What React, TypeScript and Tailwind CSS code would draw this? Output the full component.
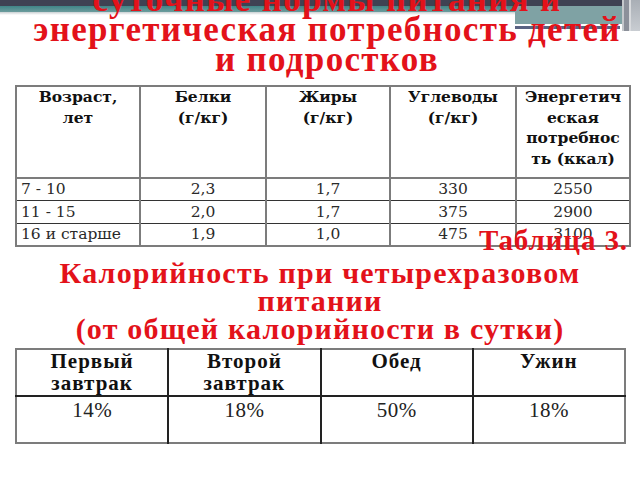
const nutrition = [
  { age: '7 - 10', protein: '2,3', fat: '1,7', carbs: '330', energy: '2550' },
  { age: '11 - 15', protein: '2,0', fat: '1,7', carbs: '375', energy: '2900' },
  { age: '16 и старше', protein: '1,9', fat: '1,0', carbs: '475', energy: '3100' },
];

const meals = [
  { name: ['Первый', 'завтрак'], share: '14%' },
  { name: ['Второй', 'завтрак'], share: '18%' },
  { name: ['Обед'], share: '50%' },
  { name: ['Ужин'], share: '18%' },
];

const serif = "font-['Liberation_Serif',serif]";
const dejavu = "font-['DejaVu_Serif',serif]";

function HeaderDecor() {
  return (
    <div className="absolute inset-0 pointer-events-none">
      <div className="absolute left-0 top-0 w-[622px] h-[21px] bg-[#3f4253]" />
      <div className="absolute left-0 top-[21px] w-[622px] h-[6px] bg-gradient-to-b from-[#3f8587] to-[#6c9c9d]" />
      <div className="absolute left-0 top-[27px] w-[515px] h-[3px] bg-gradient-to-b from-[#c9d0d2] to-white" />
      <div className="absolute left-[515px] top-[21px] w-[107px] h-[18px] bg-[#7fa2a4]" />
      <div className="absolute left-[515px] top-[41px] w-[105px] h-[3px] bg-[#5a6383]" />
      <div className="absolute left-[622px] top-0 w-[18px] h-[46px] flex">
        <div className="w-[2px] bg-[#c5c8cc]" />
        <div className="w-[5px] bg-[#8c909a]" />
        <div className="w-[2px] bg-[#d8dadd]" />
        <div className="w-[9px] bg-gradient-to-b from-[#9aa0a8] to-[#c9cdd2]" />
      </div>
    </div>
  );
}

export default function App() {
  return (
    <div className="w-[640px] h-[480px] bg-white overflow-hidden">
      <div className="relative">
        <HeaderDecor />
        <h1
          className={`relative -mt-[15px] pl-[14px] text-center text-[35px] leading-[30px] tracking-[1.3px] font-bold text-[#e3121a] ${serif}`}
        >
          суточные нормы питания и
          <br />
          энергетическая потребность детей
          <br />
          и подростков
        </h1>
      </div>

      <table
        className={`ml-[15px] mt-[10px] w-[614px] table-fixed border-collapse border-2 border-[#7c7c7c] ${dejavu}`}
      >
        <colgroup>
          <col className="w-[124px]" />
          <col className="w-[126px]" />
          <col className="w-[124px]" />
          <col className="w-[126px]" />
          <col className="w-[114px]" />
        </colgroup>
        <thead>
          <tr className="h-[92px] align-top text-[15.5px] leading-[20.5px] font-bold text-[#111]">
            <th className="border-2 border-[#7c7c7c] px-1">
              Возраст,
              <br />
              лет
            </th>
            <th className="border-2 border-[#7c7c7c] px-1">
              Белки
              <br />
              (г/кг)
            </th>
            <th className="border-2 border-[#7c7c7c] px-1">
              Жиры
              <br />
              (г/кг)
            </th>
            <th className="border-2 border-[#7c7c7c] px-1">
              Углеводы
              <br />
              (г/кг)
            </th>
            <th className="border-2 border-[#7c7c7c] px-0">
              Энергетич
              <br />
              еская
              <br />
              потребнос
              <br />
              ть (ккал)
            </th>
          </tr>
        </thead>
        <tbody className="text-[15.5px] leading-[20px] text-[#2a2a2a]">
          {nutrition.map((row, i) => (
            <tr key={row.age} className={i === 0 ? 'h-[22px]' : 'h-[23px]'}>
              <td className="border-x-2 border-x-[#7c7c7c] border-t border-t-[#333] pl-[4px]">
                {row.age}
              </td>
              <td className="border-x-2 border-x-[#7c7c7c] border-t border-t-[#333] text-center">
                {row.protein}
              </td>
              <td className="border-x-2 border-x-[#7c7c7c] border-t border-t-[#333] text-center">
                {row.fat}
              </td>
              <td className="border-x-2 border-x-[#7c7c7c] border-t border-t-[#333] text-center">
                {row.carbs}
              </td>
              <td className="border-x-2 border-x-[#7c7c7c] border-t border-t-[#333] text-center">
                {row.energy}
              </td>
            </tr>
          ))}
        </tbody>
      </table>

      <div
        className={`relative -mt-[21px] pr-[12px] text-right text-[29px] leading-[28px] tracking-[0.9px] font-bold text-[#e3121a] ${serif}`}
      >
        Таблица 3.
      </div>

      <h2
        className={`mt-[5px] text-center text-[30px] leading-[28px] tracking-[1.2px] font-bold text-[#e3121a] ${serif}`}
      >
        Калорийность при четырехразовом
        <br />
        питании
        <br />
        (от общей калорийности в сутки)
      </h2>

      <table
        className={`ml-[15px] mt-[5px] w-[611px] table-fixed border-collapse border-2 border-[#7c7c7c] ${serif}`}
      >
        <thead>
          <tr className="h-[47px] align-top text-[21px] leading-[22px] tracking-[1px] font-bold text-[#111]">
            {meals.map((m) => (
              <th
                key={m.share + m.name[0]}
                className="border-2 border-[#7c7c7c] border-x-[#222] first:border-l-[#7c7c7c] last:border-r-[#7c7c7c] border-b-[#222] pt-0"
              >
                {m.name.map((line, i) => (
                  <div key={i}>{line}</div>
                ))}
              </th>
            ))}
          </tr>
        </thead>
        <tbody>
          <tr className="h-[47px] align-top text-[21px] leading-[24px] tracking-[0.5px] text-[#222]">
            {meals.map((m) => (
              <td
                key={m.name[0]}
                className="border-x-2 border-x-[#222] first:border-l-[#7c7c7c] last:border-r-[#7c7c7c] text-center pt-[1px]"
              >
                {m.share}
              </td>
            ))}
          </tr>
        </tbody>
      </table>
    </div>
  );
}
